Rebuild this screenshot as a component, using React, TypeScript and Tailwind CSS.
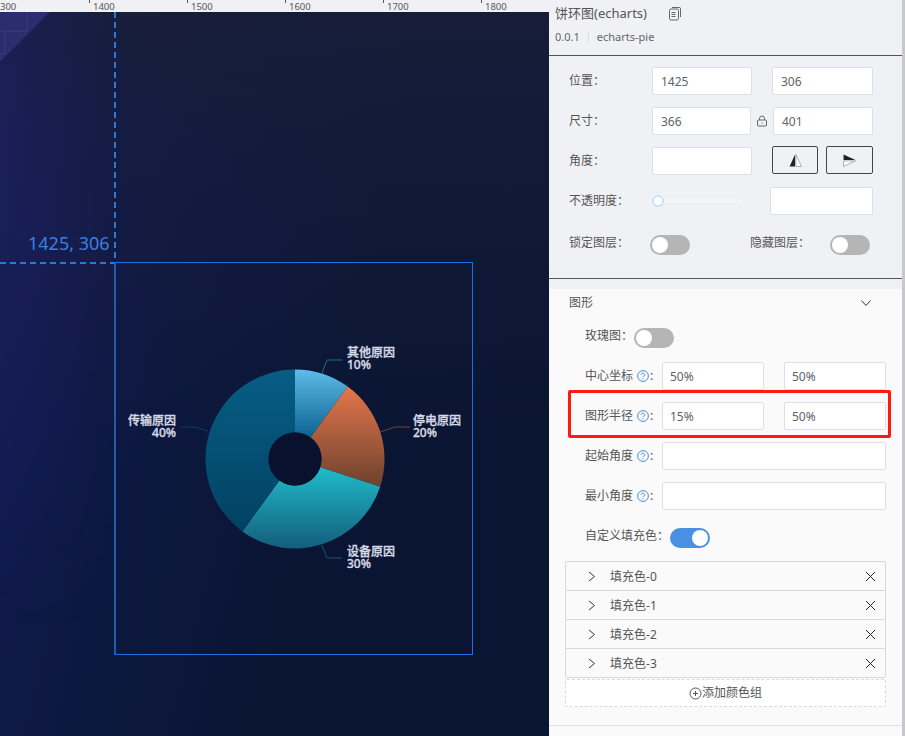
import React from "react";

const font = { fontFamily: '"Noto Sans", "Noto Sans CJK SC", sans-serif' };

function polar(r: number, deg: number, cx = 295, cy = 459) {
  const a = ((deg - 90) * Math.PI) / 180;
  return [cx + r * Math.cos(a), cy + r * Math.sin(a)];
}
function arc(r0: number, r1: number, a: number, b: number) {
  const [x1, y1] = polar(r1, a);
  const [x2, y2] = polar(r1, b);
  const [x3, y3] = polar(r0, b);
  const [x4, y4] = polar(r0, a);
  const large = b - a > 180 ? 1 : 0;
  return `M${x1} ${y1}A${r1} ${r1} 0 ${large} 1 ${x2} ${y2}L${x3} ${y3}A${r0} ${r0} 0 ${large} 0 ${x4} ${y4}Z`;
}

function Pie() {
  const labels = [
    { x: 347, y: 357, a: "start", t: "其他原因", p: "10%" },
    { x: 413, y: 425, a: "start", t: "停电原因", p: "20%" },
    { x: 347, y: 556, a: "start", t: "设备原因", p: "30%" },
    { x: 176, y: 425, a: "end", t: "传输原因", p: "40%" },
  ];
  return (
    <svg className="absolute left-0 top-0" width="548" height="736">
      <defs>
        <linearGradient id="s1" x1="0" y1="0" x2="0" y2="1">
          <stop offset="0" stopColor="#5dbce8" />
          <stop offset="1" stopColor="#0b6290" />
        </linearGradient>
        <linearGradient id="s2" x1="0" y1="0" x2="0" y2="1">
          <stop offset="0" stopColor="#e4774b" />
          <stop offset="1" stopColor="#6e412e" />
        </linearGradient>
        <linearGradient id="s3" x1="0" y1="0" x2="0" y2="1">
          <stop offset="0" stopColor="#20bccb" />
          <stop offset="1" stopColor="#145d7c" />
        </linearGradient>
        <linearGradient id="s4" x1="0" y1="0" x2="0" y2="1">
          <stop offset="0" stopColor="#075d84" />
          <stop offset="1" stopColor="#024263" />
        </linearGradient>
      </defs>
      <path d={arc(26.5, 89.5, 0, 36)} fill="url(#s1)" />
      <path d={arc(26.5, 89.5, 36, 108)} fill="url(#s2)" />
      <path d={arc(26.5, 89.5, 108, 216)} fill="url(#s3)" />
      <path d={arc(26.5, 89.5, 216, 360)} fill="url(#s4)" />
      <circle cx="295" cy="459" r="26.5" fill="#08122f" />
      <g fill="none" strokeWidth="1">
        <path d="M322 373L327 360H342" stroke="#1a6a90" />
        <path d="M380 432L395 427H410" stroke="#74402f" />
        <path d="M322 545L327 558H342" stroke="#11556f" />
        <path d="M208 431L195 427H181" stroke="#054060" />
      </g>
      {labels.map((l) => (
        <text
          key={l.t}
          textAnchor={l.a as "start" | "end"}
          fill="#d6d9e4"
          stroke="#d6d9e4"
          strokeWidth="0.35"
          fontSize="12"
          fontWeight="500"
          style={font}
        >
          <tspan x={l.x} y={l.y}>{l.t}</tspan>
          <tspan x={l.x} y={l.y + 12}>{l.p}</tspan>
        </text>
      ))}
    </svg>
  );
}

function Canvas() {
  const ticks = [
    { x: -4, l: "300", t: false },
    { x: 89, l: "1400", t: true },
    { x: 187, l: "1500", t: true },
    { x: 285, l: "1600", t: true },
    { x: 383, l: "1700", t: true },
    { x: 481, l: "1800", t: true },
  ];
  return (
    <div className="relative h-full w-[549px] shrink-0 overflow-hidden bg-[linear-gradient(105deg,#151c58_0%,#121a50_14%,#0d1840_34%,#0a1534_60%,#0a1533_100%)]">
      <div className="absolute inset-0 bg-[linear-gradient(180deg,rgba(24,30,56,0.95)_0%,rgba(24,30,60,0.6)_18%,rgba(10,20,52,0)_60%)]" />
      <div className="absolute inset-0 bg-[linear-gradient(90deg,rgba(28,34,100,0.55)_0%,rgba(28,34,100,0)_22%)] [mask-image:linear-gradient(180deg,#000_30%,transparent_85%)]" />
      <svg className="absolute left-0 top-0" width="60" height="70">
        <polygon points="0,12 50,12 0,62" fill="#2b2d6c" />
        <path d="M0 31H27V12M5 31V54M0 54H5" fill="none" stroke="#3a3c7c" strokeWidth="1" />
      </svg>
      <div className="absolute left-0 top-0 h-[12px] w-full bg-[#f0f1f5]">
        {ticks.map((t) => (
          <div key={t.l} className="absolute top-0 h-full pl-[4px]" style={{ left: t.x }}>
            {t.t && <div className="absolute left-0 top-0 h-[3px] border-l border-[#555]" />}
            <span className="block text-[9.5px] leading-[13px] text-[#555]" style={font}>{t.l}</span>
          </div>
        ))}
      </div>
      <div className="absolute left-[114px] top-[12px] h-[250px] w-[2px] bg-[repeating-linear-gradient(180deg,#2a78d8_0,#2a78d8_6px,transparent_6px,transparent_10px)]" />
      <div className="absolute left-0 top-[262px] h-[2px] w-[115px] bg-[repeating-linear-gradient(90deg,#2a78d8_0,#2a78d8_6px,transparent_6px,transparent_10px)]" />
      <div className="absolute left-[28px] top-[231px] text-[18px] leading-[24px] text-[#3a80e0]" style={font}>1425, 306</div>
      <div className="absolute left-[114px] top-[262px] h-[393px] w-[359px] border border-l-[2px] border-[#1f6ee0] border-l-[#1f5cb0]" />
      <Pie />
    </div>
  );
}

function Input({ v, w, p = "pl-[8px]" }: { v?: string; w: string; p?: string }) {
  return (
    <div className={`flex h-[28px] ${w} ${p} shrink-0 items-center rounded-[2px] border border-[#dcdfe6] bg-white pt-px text-[12px] text-[#606266]`}>
      {v}
    </div>
  );
}

function Toggle({ on }: { on?: boolean }) {
  return (
    <div className={`flex h-[20px] w-[40px] shrink-0 items-center rounded-full px-[2px] ${on ? "justify-end bg-[#4a90e2]" : "justify-start bg-[#b5b5b5]"}`}>
      <div className="h-[16px] w-[16px] rounded-full bg-white" />
    </div>
  );
}

function Help() {
  return (
    <svg width="12" height="12" viewBox="0 0 12 12" className="ml-[4px] mr-[1px] shrink-0" fill="none">
      <circle cx="6" cy="6" r="5.4" stroke="#4a90e2" />
      <path d="M4.4 4.7a1.6 1.6 0 1 1 2.5 1.3c-.6.4-.9.6-.9 1.2" stroke="#4a90e2" />
      <circle cx="6" cy="8.9" r=".6" fill="#4a90e2" />
    </svg>
  );
}

function FieldLabel({ t }: { t: string }) {
  return (
    <div className="flex w-[77px] shrink-0 items-center text-[12px] text-[#555]">
      <span>{t}</span>
      <Help />
      <span>:</span>
    </div>
  );
}

function Panel() {
  return (
    <div className="relative flex h-full flex-1 flex-col overflow-hidden bg-[#f0f1f5]" style={font}>
      <div className="mr-[3px] h-[56px] shrink-0 border-b border-[#555] pl-[6px] pt-[4px]">
        <div className="flex h-[19px] items-center text-[13px] text-[#555]">
          <span>饼环图(echarts)</span>
          <svg className="ml-[21px]" width="14" height="15" viewBox="0 0 14 15" fill="none" stroke="#666">
            <rect x="1.5" y="3" width="9" height="11" rx="1.5" />
            <path d="M4 1.5h7.5a1 1 0 0 1 1 1V11M3.5 6.5h4M3.5 8.5h4M3.5 10.5h4" />
          </svg>
        </div>
        <div className="mt-[6px] flex h-[16px] items-center text-[11px] text-[#666]">
          <span>0.0.1</span>
          <span className="mx-[8px] h-[10px] border-l border-[#ddd]" />
          <span>echarts-pie</span>
        </div>
      </div>

      <div className="mr-[3px] h-[223px] shrink-0 border-b border-[#555] pt-[11px]">
        <div className="flex h-[28px] items-center">
          <div className="w-[103px] pl-[20px] text-[12px] text-[#555]">位置：</div>
          <Input v="1425" w="w-[100px]" />
          <div className="w-[20px]" />
          <Input v="306" w="w-[101px]" />
        </div>
        <div className="mt-[12px] flex h-[28px] items-center">
          <div className="w-[103px] pl-[20px] text-[12px] text-[#555]">尺寸：</div>
          <Input v="366" w="w-[99px]" />
          <svg className="mx-[5px]" width="12" height="12" viewBox="0 0 12 12" fill="none" stroke="#666">
            <rect x="1.5" y="5" width="9" height="6" rx="1" />
            <path d="M3.5 5V3.5a2.5 2.5 0 0 1 5 0V5M6 7.5v1" />
          </svg>
          <Input v="401" w="w-[100px]" />
        </div>
        <div className="mt-[12px] flex h-[28px] items-center">
          <div className="w-[103px] pl-[20px] text-[12px] text-[#555]">角度：</div>
          <Input w="w-[100px]" />
          <div className="w-[20px]" />
          <div className="-mt-[2px] flex h-[28px] w-[46px] items-center justify-center rounded-[2px] border border-[#444]">
            <svg width="13" height="13" viewBox="0 0 12 12">
              <path d="M5.6 0.5V11.5H0.5Z" fill="#222" />
              <path d="M6.4 0.5V11.5H11.5Z" fill="#fff" stroke="#888" strokeWidth=".6" />
            </svg>
          </div>
          <div className="w-[8px]" />
          <div className="-mt-[2px] flex h-[28px] w-[47px] items-center justify-center rounded-[2px] border border-[#444]">
            <svg width="13" height="13" viewBox="0 0 12 12">
              <path d="M0.5 0.5L11.5 5.6H0.5Z" fill="#222" />
              <path d="M0.5 6.4H11.5L0.5 11.5Z" fill="#fff" stroke="#888" strokeWidth=".6" />
            </svg>
          </div>
        </div>
        <div className="mt-[12px] flex h-[28px] items-center">
          <div className="w-[103px] pl-[20px] text-[12px] text-[#555]">不透明度：</div>
          <div className="relative h-[4px] w-[90px] rounded-full bg-[#f5f5f5]">
            <div className="absolute left-0 -top-[4px] h-[12px] w-[12px] rounded-full border-[2px] border-[#c5e4fb] bg-white" />
          </div>
          <div className="w-[28px]" />
          <Input w="w-[103px]" />
        </div>
        <div className="mt-[20px] flex h-[20px] items-center">
          <div className="-mt-[4px] w-[101px] pl-[20px] text-[12px] text-[#555]">锁定图层：</div>
          <Toggle />
          <div className="w-[60px]" />
          <div className="-mt-[4px] w-[80px] text-[12px] text-[#555]">隐藏图层：</div>
          <Toggle />
        </div>
      </div>

      <div className="mr-[3px] mt-[10px] flex-1 bg-[#fafafa]">
        <div className="flex h-[28px] items-center justify-between pl-[20px] pr-[30px] text-[12px] text-[#555]">
          <span>图形</span>
          <svg width="12" height="12" viewBox="0 0 12 12" fill="none" stroke="#333"><path d="M1.5 3.5 6 8.5l4.5-5" /></svg>
        </div>
        <div className="mt-[11px] flex h-[20px] items-center pl-[36px] text-[12px] text-[#555]">
          <span className="-mt-[4px] w-[49px]">玫瑰图：</span>
          <Toggle />
        </div>
        <div className="mt-[14px] flex h-[28px] items-center pl-[36px]">
          <FieldLabel t="中心坐标" />
          <Input v="50%" w="w-[102px]" p="pl-[7px]" />
          <div className="w-[20px]" />
          <Input v="50%" w="w-[102px]" p="pl-[7px]" />
        </div>
        <div className="mt-[12px] flex h-[28px] items-center pl-[36px]">
          <FieldLabel t="图形半径" />
          <Input v="15%" w="w-[102px]" p="pl-[7px]" />
          <div className="w-[20px]" />
          <Input v="50%" w="w-[102px]" p="pl-[7px]" />
        </div>
        <div className="mt-[12px] flex h-[28px] items-center pl-[36px]">
          <FieldLabel t="起始角度" />
          <Input w="w-[224px]" />
        </div>
        <div className="mt-[12px] flex h-[28px] items-center pl-[36px]">
          <FieldLabel t="最小角度" />
          <Input w="w-[224px]" />
        </div>
        <div className="mt-[18px] flex h-[20px] items-center pl-[36px] text-[12px] text-[#555]">
          <span className="-mt-[4px] w-[85px]">自定义填充色：</span>
          <Toggle on />
        </div>
        <div className="ml-[16px] mt-[13px] w-[321px] rounded-[2px] border border-b-0 border-[#d9d9d9]">
          {[0, 1, 2, 3].map((i) => (
            <div key={i} className="flex h-[29px] items-center border-b border-[#d9d9d9] pl-[22px] pr-[9px] text-[12px] text-[#555]">
              <svg width="8" height="11" viewBox="0 0 8 11" fill="none" stroke="#333"><path d="M1 1l5.5 4.5L1 10" /></svg>
              <span className="ml-[14px] flex-1 pt-[2px]">填充色-{i}</span>
              <svg width="11" height="11" viewBox="0 0 11 11" fill="none" stroke="#222"><path d="M1 1l9 9M10 1l-9 9" /></svg>
            </div>
          ))}
        </div>
        <div className="ml-[16px] mt-[1px] flex h-[28px] w-[321px] items-center justify-center rounded-[2px] border border-dashed border-[#d9d9d9] bg-white text-[12px] text-[#555]">
          <svg width="13" height="13" viewBox="0 0 13 13" fill="none" stroke="#555"><circle cx="6.5" cy="6.5" r="5.5" /><path d="M4 6.5h5M6.5 4v5" /></svg>
          <span>添加颜色组</span>
        </div>
        <div className="mt-[18px] border-t border-[#e0e0e0]" />
      </div>

      <div className="absolute left-[19px] top-[390px] h-[48px] w-[323px] rounded-[2px] border-[3px] border-[#ff1a10]" />
      <div className="absolute right-0 top-0 h-full w-[3px] bg-[#c8c8cc]" />
    </div>
  );
}

export default function App() {
  return (
    <div className="flex h-[736px] w-[905px] overflow-hidden bg-white" style={font}>
      <Canvas />
      <Panel />
    </div>
  );
}
